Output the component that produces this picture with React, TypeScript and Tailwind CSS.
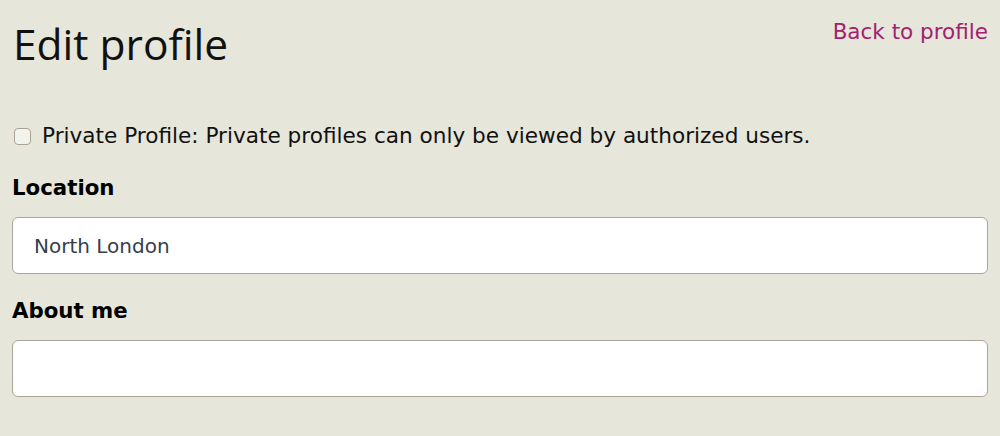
import React from "react";

export default function App() {
  return (
    <div className="w-[1000px] h-[436px] bg-[#e6e6da] overflow-hidden px-3 pt-[14px]" style={{ fontFamily: '"DejaVu Sans", sans-serif' }}>
      <div className="flex justify-between items-start">
        <h1 className="text-[42.5px] leading-[60px] text-[#111] font-['Open_Sans',sans-serif] ml-[1px]">Edit profile</h1>
        <a href="#" className="text-[21.5px] leading-[32px] text-[#a3216f] mt-[2px]">Back to profile</a>
      </div>
      <div className="flex items-center mt-[49px] gap-[11px]">
        <span className="ml-[2px] w-[17px] h-[17px] border border-[#a9a294] rounded-[4px] bg-[#f3f3ee]"></span>
        <span className="text-[21.6px] leading-[26px] text-[#111]">Private Profile: Private profiles can only be viewed by authorized users.</span>
      </div>
      <div className="mt-[26px] text-[21.3px] leading-[26px] font-bold text-black">Location</div>
      <div className="mt-[16px] h-[57px] bg-white border border-[#aaa595] rounded-[6px] flex items-center px-[21px] text-[20px] text-[#333f4f]">North London</div>
      <div className="mt-[24px] text-[21.3px] leading-[26px] font-bold text-black">About me</div>
      <div className="mt-[16px] h-[57px] bg-white border border-[#aaa595] rounded-[6px]"></div>
    </div>
  );
}
